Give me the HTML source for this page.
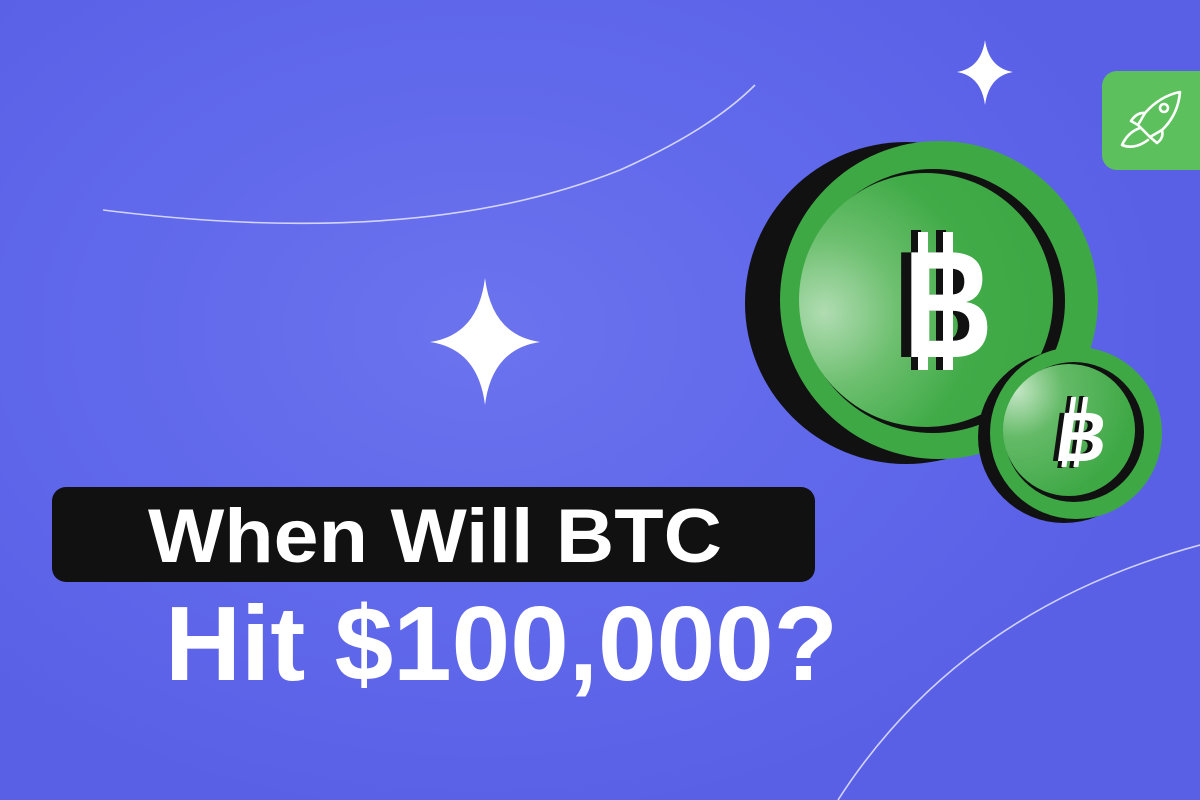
<!DOCTYPE html>
<html><head><meta charset="utf-8"><style>
html,body{margin:0;padding:0;width:1200px;height:800px;overflow:hidden}
body{background:radial-gradient(ellipse 700px 500px at 480px 330px,#6c73ee 0%,#6068eb 55%,#5a60e6 100%)}
</style></head><body>
<svg width="1200" height="800" viewBox="0 0 1200 800" xmlns="http://www.w3.org/2000/svg" style="position:absolute;left:0;top:0">
<defs>
<radialGradient id="face" cx="0.1" cy="0.55" r="0.85">
<stop offset="0" stop-color="#b0dcb2"/><stop offset="0.35" stop-color="#6cbf6e"/><stop offset="0.7" stop-color="#41ab48"/><stop offset="1" stop-color="#3ea845"/>
</radialGradient>
<radialGradient id="face2" cx="0.1" cy="0.2" r="0.9">
<stop offset="0" stop-color="#c4e6c5"/><stop offset="0.4" stop-color="#64ba67"/><stop offset="1" stop-color="#3ea845"/>
</radialGradient>
</defs>
<path d="M103 210 Q420 250 620 170 Q710 130 755 85" fill="none" stroke="#e6e8ff" stroke-width="1.6" opacity="0.85"/>
<path d="M838 800 Q960 610 1200 545" fill="none" stroke="#e6e8ff" stroke-width="1.6" opacity="0.85"/>
<path d="M485 278 Q492 335 540 342 Q492 349 485 405 Q478 349 430 342 Q478 335 485 278Z" fill="#fff"/>
<path d="M985 40 Q989 68 1013 72 Q989 76 985 105 Q981 76 957 72 Q981 68 985 40Z" fill="#fff"/>
<rect x="1102" y="71" width="120" height="99" rx="15" fill="#5cc15c"/>
<g fill="none" stroke="#fff" stroke-width="2.6" stroke-linecap="round" stroke-linejoin="round">
<path d="M1180 92 Q1160 96 1145 113 L1138 125 L1150 137 L1162 130 Q1178 115 1180 92Z"/>
<circle cx="1164" cy="108" r="4"/>
<path d="M1145 113 Q1137 112 1131 121 L1138 125"/>
<path d="M1162 130 Q1164 138 1157 143 L1150 137"/>
<path d="M1140 128 Q1128 132 1122 145 Q1134 150 1148 140"/>
</g>
<circle cx="906" cy="303" r="161" fill="#111"/>
<circle cx="939" cy="300" r="159" fill="#3ea845"/>
<circle cx="933" cy="301" r="132" fill="#111"/>
<circle cx="926" cy="300" r="127" fill="url(#face)"/>
<g font-family="Liberation Sans, sans-serif" font-weight="bold" font-size="152">
<rect x="911" y="230" width="10" height="140" fill="#111"/><rect x="936" y="230" width="10" height="140" fill="#111"/>
<text x="893" y="357" fill="#111" textLength="88" lengthAdjust="spacingAndGlyphs">B</text>
<rect x="918" y="232" width="10" height="138" fill="#fff"/><rect x="943" y="232" width="10" height="138" fill="#fff"/>
<text x="903" y="357" fill="#fff" textLength="90" lengthAdjust="spacingAndGlyphs">B</text>
</g>
<circle cx="1064" cy="437" r="86" fill="#111"/>
<circle cx="1076" cy="433" r="86" fill="#3ea845"/>
<circle cx="1074" cy="432" r="70" fill="#111"/>
<circle cx="1069" cy="430" r="66" fill="url(#face2)"/>
<g font-family="Liberation Sans, sans-serif" font-weight="bold" font-size="70" transform="skewX(-8) translate(61 0)">
<rect x="1062" y="396" width="5" height="72" fill="#111"/><rect x="1074" y="396" width="5" height="72" fill="#111"/>
<text x="1052" y="461" fill="#111">B</text>
<rect x="1066" y="397" width="5" height="70" fill="#fff"/><rect x="1078" y="397" width="5" height="70" fill="#fff"/>
<text x="1057" y="461" fill="#fff">B</text>
</g>
<rect x="52" y="487" width="763" height="95" rx="14" fill="#111"/>
<text x="148" y="562" font-family="Liberation Sans, sans-serif" font-weight="bold" font-size="76" fill="#fff" textLength="574" lengthAdjust="spacingAndGlyphs">When Will BTC</text>
<text x="165" y="680" font-family="Liberation Sans, sans-serif" font-weight="bold" font-size="106" fill="#fff" textLength="673" lengthAdjust="spacingAndGlyphs">Hit $100,000?</text>
</svg>
</body></html>
